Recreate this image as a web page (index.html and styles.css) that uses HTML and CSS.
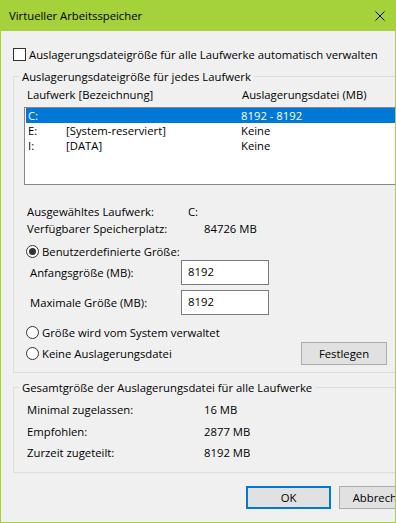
FILE: index.html
```html
<!DOCTYPE html>
<html lang="de">
<head>
    <meta charset="UTF-8">
    <meta name="viewport" content="width=device-width, initial-scale=1.0">
    <title>Virtueller Arbeitsspeicher</title>
    <link rel="stylesheet" href="styles.css">
</head>
<body>
    <div class="window">
        <div class="titlebar">
            <span class="title">Virtueller Arbeitsspeicher</span>
            <svg class="close" width="10" height="10" viewBox="0 0 10 10">
                <path d="M0.5 0.5L9.5 9.5M9.5 0.5L0.5 9.5" stroke="#000" stroke-width="1" fill="none"/>
            </svg>
        </div>

        <div class="dialog">
            <div class="check-row">
                <span class="checkbox"></span>
                <span>Auslagerungsdateigröße für alle Laufwerke automatisch verwalten</span>
            </div>

            <fieldset class="group group-drives">
                <legend>Auslagerungsdateigröße für jedes Laufwerk</legend>

                <div class="list-head">
                    <span class="head-drive">Laufwerk [Bezeichnung]</span>
                    <span>Auslagerungsdatei (MB)</span>
                </div>

                <div class="drive-list">
                    <div class="drive-row selected">
                        <span>C:</span><span></span><span>8192 - 8192</span>
                    </div>
                    <div class="drive-row">
                        <span>E:</span><span>[System-reserviert]</span><span>Keine</span>
                    </div>
                    <div class="drive-row">
                        <span>I:</span><span>[DATA]</span><span>Keine</span>
                    </div>
                </div>

                <div class="info first">
                    <span class="info-label short">Ausgewähltes Laufwerk:</span>
                    <span>C:</span>
                </div>
                <div class="info">
                    <span class="info-label">Verfügbarer Speicherplatz:</span>
                    <span>84726 MB</span>
                </div>

                <div class="radio-row custom">
                    <span class="radio checked"></span>
                    <span>Benutzerdefinierte Größe:</span>
                </div>
                <div class="size-row">
                    <span class="size-label">Anfangsgröße (MB):</span>
                    <input class="size-input" type="text" value="8192">
                </div>
                <div class="size-row second">
                    <span class="size-label">Maximale Größe (MB):</span>
                    <input class="size-input" type="text" value="8192">
                </div>

                <div class="radio-row system">
                    <span class="radio"></span>
                    <span>Größe wird vom System verwaltet</span>
                </div>
                <div class="none-row">
                    <div class="radio-row">
                        <span class="radio"></span>
                        <span>Keine Auslagerungsdatei</span>
                    </div>
                    <button class="btn btn-set">Festlegen</button>
                </div>
            </fieldset>

            <fieldset class="group group-total">
                <legend>Gesamtgröße der Auslagerungsdatei für alle Laufwerke</legend>
                <div class="total-rows">
                    <div class="info">
                        <span class="info-label">Minimal zugelassen:</span>
                        <span>16 MB</span>
                    </div>
                    <div class="info">
                        <span class="info-label">Empfohlen:</span>
                        <span>2877 MB</span>
                    </div>
                    <div class="info">
                        <span class="info-label">Zurzeit zugeteilt:</span>
                        <span>8192 MB</span>
                    </div>
                </div>
            </fieldset>

            <div class="buttons">
                <button class="btn btn-default">OK</button>
                <button class="btn">Abbrechen</button>
            </div>
        </div>
    </div>
</body>
</html>
```

FILE: styles.css
```css
  body {
      margin: 0;
      padding: 0;
      font-family: 'Open Sans', 'Noto Sans', sans-serif;
      font-size: 11.3px;
      line-height: 15px;
      color: #000;
      background-color: #f0f0f0;
  }
  .window {
      width: 396px;
      height: 523px;
      box-sizing: border-box;
      border-left: 1px solid #a5d13a;
      border-right: 1px solid #a5d13a;
      border-bottom: 1px solid #a5d13a;
      background-color: #f0f0f0;
      overflow: hidden;
  }
  .titlebar {
      height: 31px;
      background-color: #a5d13a;
      display: flex;
      align-items: center;
      justify-content: space-between;
      padding: 0 10px 0 8px;
  }
  .close {
      display: block;
  }
  .dialog {
      width: 411px;
      padding: 16px 12px 0 12px;
  }
  .check-row {
      display: flex;
      align-items: center;
      gap: 3px;
      height: 15px;
  }
  .checkbox {
      width: 13px;
      height: 13px;
      box-sizing: border-box;
      border: 1px solid #333;
      background-color: #fff;
  }
  .group {
      margin: 7px 0 0 0;
      padding: 0 10px 0 10px;
      border: 1px solid #dcdcdc;
      min-width: 0;
  }
  .group legend {
      margin-left: -5px;
      padding: 0 3px;
      line-height: 15px;
  }
  .list-head {
      display: flex;
      margin-top: 3px;
      padding-left: 3px;
  }
  .head-drive {
      width: 215px;
  }
  .drive-list {
      margin-top: 5px;
      height: 78px;
      box-sizing: border-box;
      border: 1px solid #828790;
      background-color: #fff;
      padding-left: 1px;
  }
  .drive-row {
      display: grid;
      grid-template-columns: 38px 175px 1fr;
      height: 15px;
      padding-left: 2px;
  }
  .drive-row.selected {
      background-color: #0078d7;
      color: #fff;
  }
  .info {
      display: flex;
      padding-left: 3px;
      margin-top: 2px;
  }
  .info.first {
      margin-top: 19px;
  }
  .info-label {
      width: 177px;
  }
  .info-label.short {
      width: 161px;
  }
  .radio-row {
      display: flex;
      align-items: center;
      gap: 3px;
      padding-left: 2px;
      height: 15px;
  }
  .radio-row.custom {
      margin-top: 8px;
  }
  .radio-row.system {
      margin-top: 10px;
  }
  .radio {
      width: 13px;
      height: 13px;
      box-sizing: border-box;
      border: 1px solid #333;
      border-radius: 50%;
      background-color: #fff;
      display: flex;
      align-items: center;
      justify-content: center;
  }
  .radio.checked::after {
      content: "";
      width: 7px;
      height: 7px;
      border-radius: 50%;
      background-color: #333;
  }
  .size-row {
      display: flex;
      align-items: center;
      margin-top: 1px;
      padding-left: 6px;
  }
  .size-row.second {
      margin-top: 5px;
  }
  .size-label {
      width: 151px;
  }
  .size-input {
      width: 88px;
      height: 25px;
      box-sizing: border-box;
      margin: 0;
      padding: 0 6px 3px 6px;
      border: 1px solid #7a7a7a;
      background-color: #fff;
      font-family: inherit;
      font-size: inherit;
      color: #000;
      outline: none;
  }
  .none-row {
      display: flex;
      align-items: center;
      margin-top: 2px;
      padding-bottom: 7px;
  }
  .none-row .radio-row {
      width: 275px;
  }
  .btn {
      height: 23px;
      width: 85px;
      box-sizing: border-box;
      margin: 0;
      padding: 0;
      border: 1px solid #adadad;
      background-color: #e1e1e1;
      font-family: inherit;
      font-size: inherit;
      color: #000;
  }
  .btn-set {
      width: 86px;
  }
  .btn-default {
      border: 2px solid #0078d7;
  }
  .total-rows {
      display: flex;
      flex-direction: column;
      gap: 6.5px;
      padding-top: 7px;
      padding-bottom: 12px;
  }
  .total-rows .info {
      margin-top: 0;
  }
  .buttons {
      display: flex;
      justify-content: flex-end;
      gap: 8px;
      margin-top: 13px;
  }
```
